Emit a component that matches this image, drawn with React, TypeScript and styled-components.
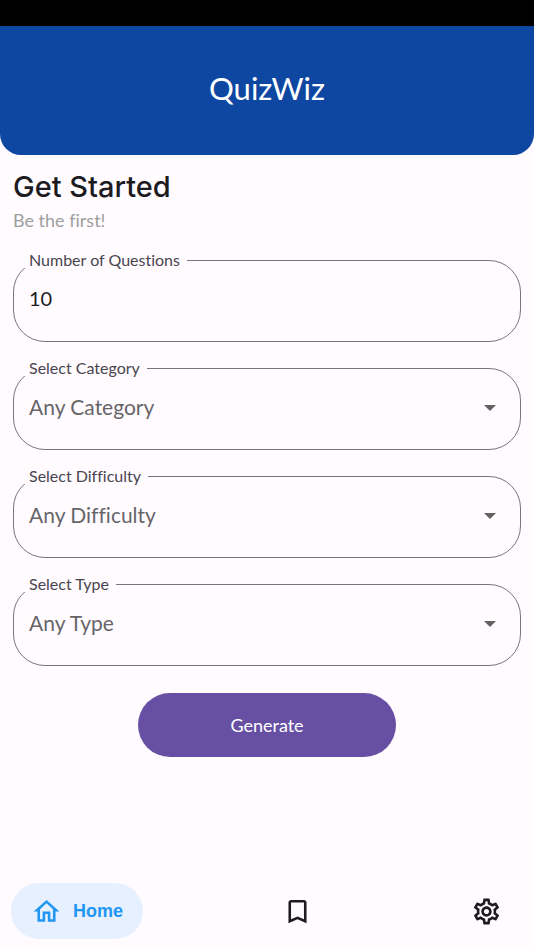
import React from "react";
import styled, { createGlobalStyle } from "styled-components";
import { MdBookmarkBorder, MdOutlineHome, MdOutlineSettings } from "react-icons/md";

const GlobalStyle = createGlobalStyle`
  *, *::before, *::after {
    box-sizing: border-box;
  }

  body {
    margin: 0;
    background: #fffbff;
    color: #1c1b1f;
    font-family: Lato, "Open Sans", sans-serif;
    font-variant-ligatures: none;
  }

  button, input, select {
    font-family: inherit;
    font-variant-ligatures: inherit;
  }
`;

const Screen = styled.div`
  display: flex;
  flex-direction: column;
  min-height: 100vh;
`;

const StatusBar = styled.div`
  height: 26px;
  background: #000000;
`;

const Header = styled.header`
  display: flex;
  align-items: center;
  justify-content: center;
  padding: 42px 16px 47px;
  border-radius: 0 0 21px 21px;
  background: #0d47a1;
  color: #ffffff;
`;

const AppTitle = styled.h1`
  margin: 0;
  font-size: 31px;
  font-weight: 400;
  line-height: 40px;
`;

const Content = styled.main`
  display: flex;
  flex: 1;
  flex-direction: column;
  padding: 16px 13px;
`;

const Heading = styled.h2`
  margin: 0;
  font-family: Inter, sans-serif;
  font-size: 29px;
  font-weight: 500;
  line-height: 32px;
`;

const Subheading = styled.p`
  margin: 5px 0 0;
  color: #9e9e9e;
  font-size: 18px;
  line-height: 24px;
`;

const Form = styled.form`
  display: flex;
  flex-direction: column;
  gap: 18px;
  margin-top: 20px;
`;

const Field = styled.fieldset`
  min-width: 0;
  margin: 0;
  padding: 0 10px 29px;
  border: 1px solid #79747e;
  border-radius: 32px;
`;

const FieldLabel = styled.legend`
  padding: 0 7px 0 5px;
  color: #49454f;
  font-size: 16px;
  line-height: 16px;
`;

const ControlRow = styled.div`
  display: grid;
  align-items: center;
  margin-top: 16px;
`;

const TextInput = styled.input`
  grid-area: 1 / 1;
  width: 100%;
  height: 28px;
  padding: 0 5px;
  border: 0;
  outline: 0;
  background: transparent;
  color: #1c1b1f;
  font-size: 20px;
`;

const Select = styled.select`
  grid-area: 1 / 1;
  width: 100%;
  height: 28px;
  padding: 0 32px 0 5px;
  border: 0;
  outline: 0;
  appearance: none;
  background: transparent;
  color: #676568;
  font-size: 21px;
`;

const Arrow = styled.svg`
  grid-area: 1 / 1;
  justify-self: end;
  width: 12px;
  height: 6px;
  margin-top: 4px;
  margin-right: 14px;
  fill: #616161;
  pointer-events: none;
`;

const GenerateButton = styled.button`
  align-self: center;
  width: 258px;
  height: 64px;
  margin-top: 9px;
  border: 0;
  border-radius: 32px;
  background: #6750a4;
  color: #ffffff;
  font-size: 18px;
  cursor: pointer;
`;

const BottomNav = styled.nav`
  display: flex;
  justify-content: space-between;
  padding: 11px;
`;

const NavButton = styled.button<{ $active?: boolean }>`
  display: flex;
  align-items: center;
  justify-content: center;
  gap: 11px;
  min-width: 72px;
  height: 56px;
  padding: 0 20px;
  border: 0;
  border-radius: 28px;
  background: ${({ $active }) => ($active ? "#e6f0fe" : "transparent")};
  color: ${({ $active }) => ($active ? "#2196f3" : "#1c1b1f")};
  font-family: "Liberation Sans", Arial, sans-serif;
  font-size: 18px;
  font-weight: 700;
  cursor: pointer;
`;

const selects = [
  { id: "category", label: "Select Category", value: "Any Category" },
  { id: "difficulty", label: "Select Difficulty", value: "Any Difficulty" },
  { id: "type", label: "Select Type", value: "Any Type" },
];

export default function App() {
  return (
    <Screen>
      <GlobalStyle />
      <StatusBar />
      <Header>
        <AppTitle>QuizWiz</AppTitle>
      </Header>
      <Content>
        <Heading>Get Started</Heading>
        <Subheading>Be the first!</Subheading>
        <Form onSubmit={(event) => event.preventDefault()}>
          <Field>
            <FieldLabel>
              <label htmlFor="amount">Number of Questions</label>
            </FieldLabel>
            <ControlRow>
              <TextInput id="amount" inputMode="numeric" defaultValue="10" />
            </ControlRow>
          </Field>
          {selects.map(({ id, label, value }) => (
            <Field key={id}>
              <FieldLabel>
                <label htmlFor={id}>{label}</label>
              </FieldLabel>
              <ControlRow>
                <Select id={id}>
                  <option>{value}</option>
                </Select>
                <Arrow viewBox="0 0 12 6" aria-hidden="true">
                  <path d="M0 0h12L6 6z" />
                </Arrow>
              </ControlRow>
            </Field>
          ))}
          <GenerateButton type="submit">Generate</GenerateButton>
        </Form>
      </Content>
      <BottomNav>
        <NavButton type="button" $active aria-current="page">
          <MdOutlineHome size={31} aria-hidden="true" />
          Home
        </NavButton>
        <NavButton type="button" aria-label="Bookmarks">
          <MdBookmarkBorder size={31} aria-hidden="true" />
        </NavButton>
        <NavButton type="button" aria-label="Settings">
          <MdOutlineSettings size={31} aria-hidden="true" />
        </NavButton>
      </BottomNav>
    </Screen>
  );
}
